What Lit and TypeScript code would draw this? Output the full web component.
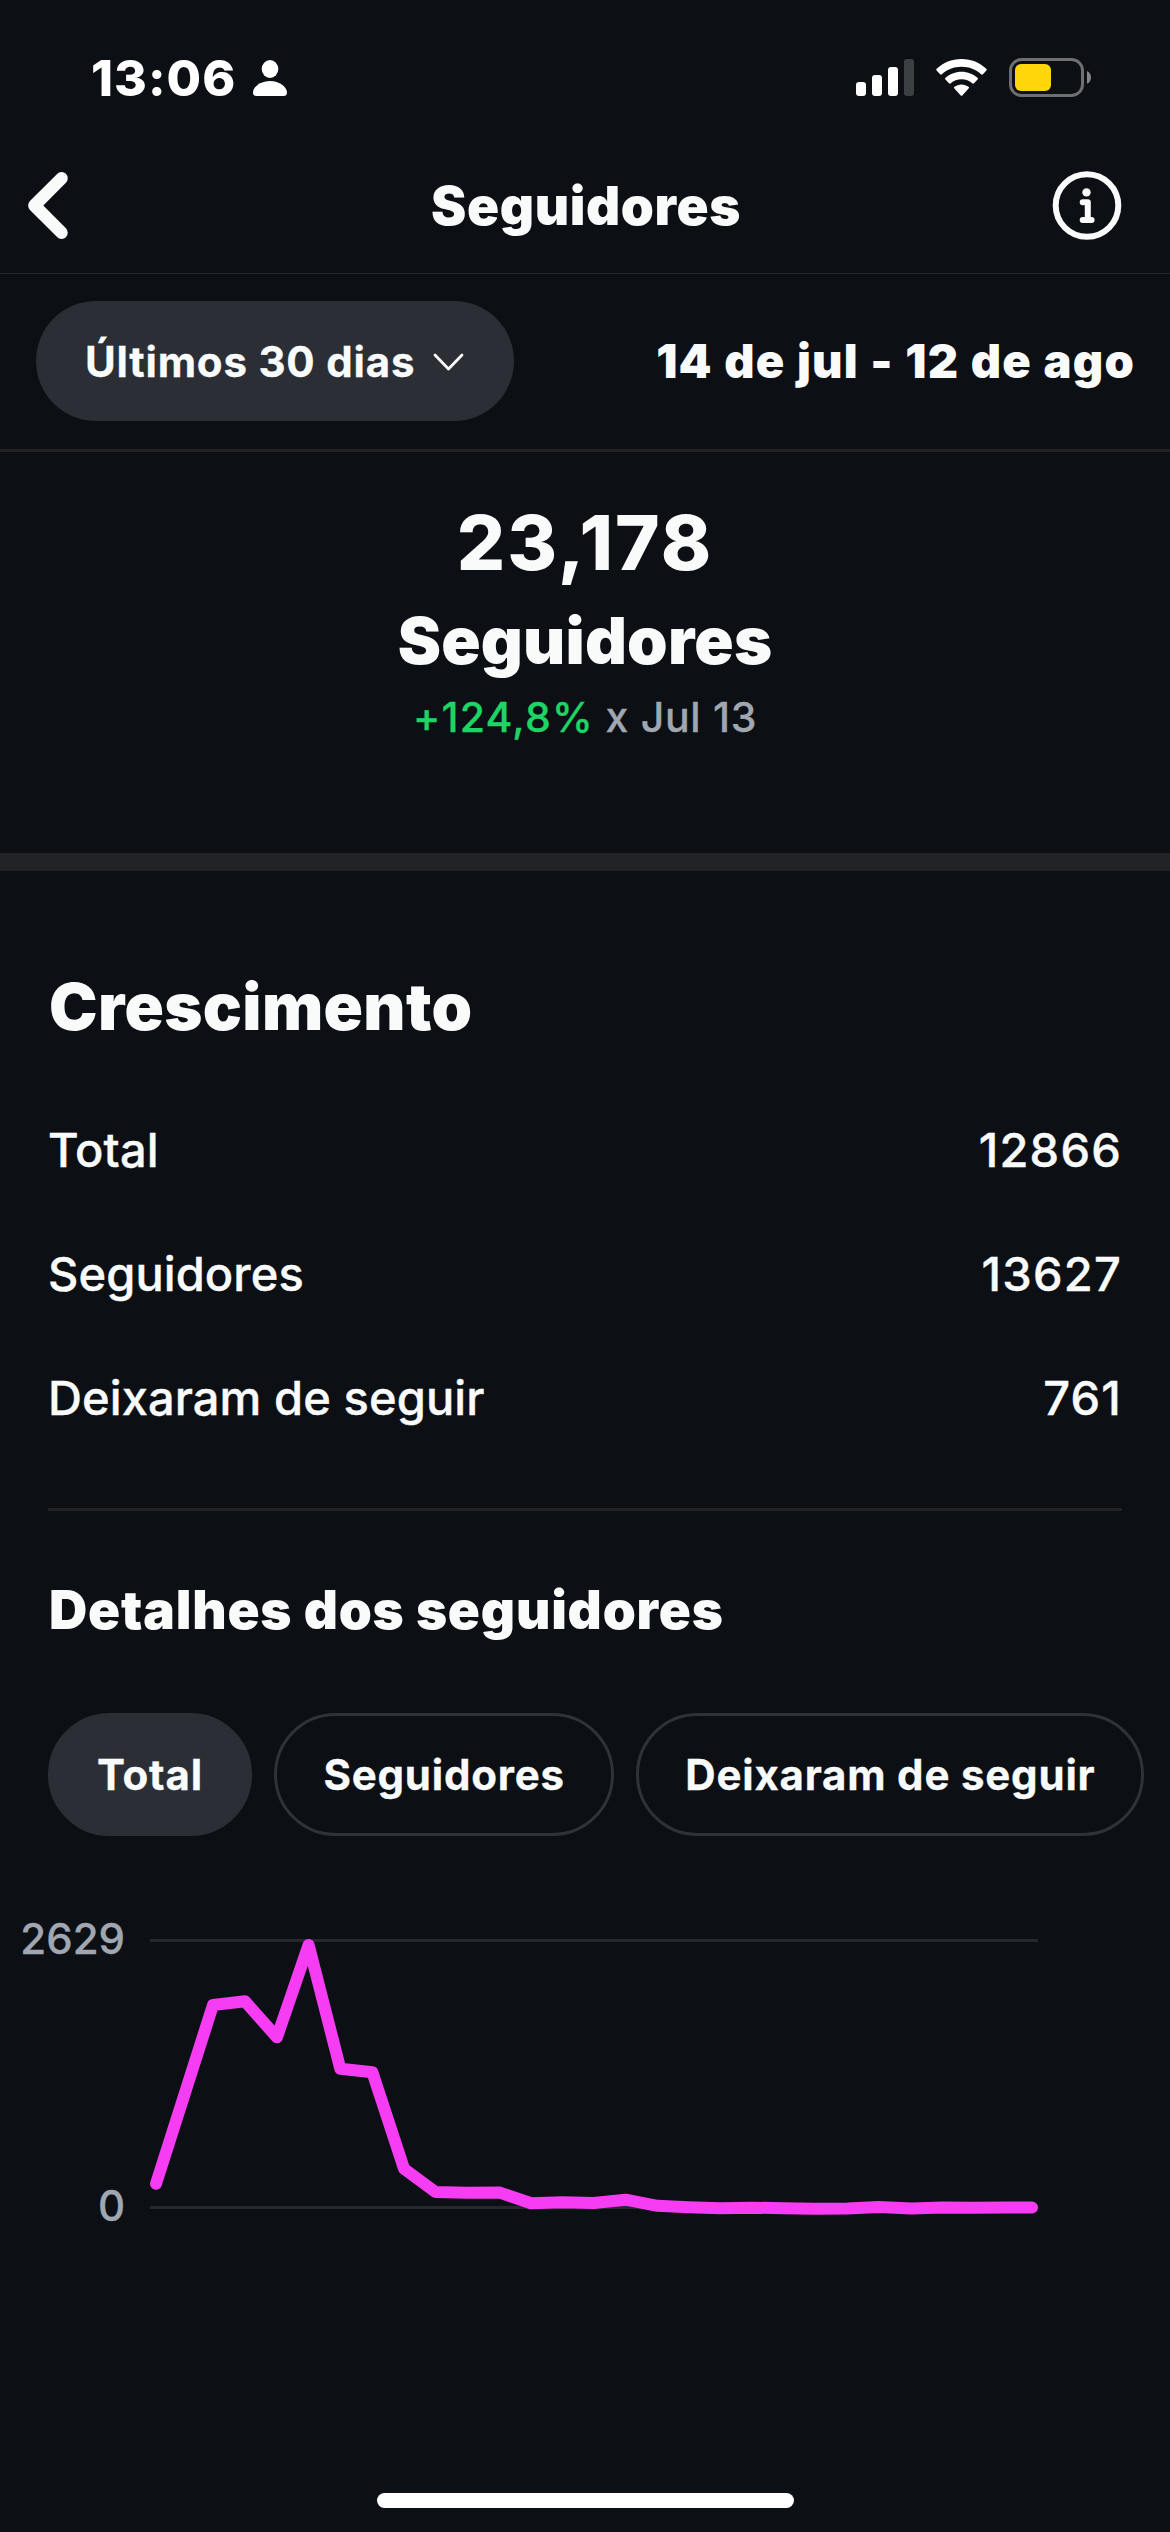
import { LitElement, html, svg, css } from "lit";
import { customElement, property, state } from "lit/decorators.js";
import { classMap } from "lit/directives/class-map.js";

/** Daily net followers as plot coordinates inside the 888x307 chart canvas. */
const SERIES: Array<[number, number]> = [
  [6, 264.7], [63, 86], [95, 82.3], [126.9, 118.3], [158.6, 26], [190.3, 149.7],
  [222.4, 153.3], [254, 249.7], [285.5, 273], [317.2, 273.8], [349.2, 273.4],
  [381, 284.3], [412.7, 283.3], [443.6, 284], [475.7, 280.7], [507.4, 286.8],
  [538.7, 288.3], [570.4, 289.2], [602.2, 288.7], [633.5, 289.2], [665.2, 289.7],
  [697.3, 289.4], [729, 288.1], [761.5, 289.4], [792, 288.5], [824, 288.7],
  [856, 288.6], [882, 288.6],
];

@customElement("status-bar")
class StatusBar extends LitElement {
  static styles = css`
    :host { display: flex; align-items: flex-start; height: 139px; box-sizing: border-box; padding: 53px 79px 0 91px; }
    .time { width: 145px; font-size: 50px; font-weight: 800; line-height: 50px; letter-spacing: 1px; color: #fff; }
    .person { margin: 7px 0 0 17px; }
    .icons { margin-left: auto; display: flex; align-items: flex-start; padding-top: 5px; }
    svg { display: block; }
    .wifi { margin: 1px 0 0 22px; }
    .battery { margin-left: 22px; }
  `;
  render() {
    return html`
      <span class="time">13:06</span>
      <svg class="person" width="34" height="36" viewBox="0 0 34 36" fill="#fff">
        <ellipse cx="17" cy="9" rx="8.3" ry="9" />
        <path d="M17 21C7.500 21 0 27 0 32.500C0 35 1.200 36 3.500 36H30.500C32.800 36 34 35 34 32.500C34 27 26.500 21 17 21Z" />
      </svg>
      <div class="icons">
        <svg width="59" height="38" viewBox="0 0 59 38" fill="#fff">
          <rect x="1" y="24" width="10" height="14" rx="3" />
          <rect x="17" y="17" width="10" height="21" rx="3" />
          <rect x="33" y="9" width="10" height="29" rx="3" />
          <rect x="49" y="1" width="10" height="37" rx="3" fill="#3d4043" />
        </svg>
        <svg class="wifi" width="51" height="37" viewBox="0 0 51 37" fill="#fff">
          <path d="M25.500 0C35.300 0 44 3.700 50.300 9.800C50.900 10.400 50.900 11 50.400 11.500L46.900 15.200C46.300 15.800 45.700 15.800 45.100 15.200C39.900 10.400 33 7.700 25.500 7.700C18 7.700 11.100 10.400 5.900 15.200C5.300 15.800 4.700 15.800 4.100 15.200L0.600 11.500C0.100 11 0.100 10.400 0.700 9.800C7 3.700 15.700 0 25.500 0Z" />
          <path d="M25.500 12.700C31.700 12.700 37.300 15 41.500 18.800C42.100 19.400 42.100 20 41.600 20.500L38 24.200C37.500 24.800 36.800 24.800 36.200 24.200C33.400 21.800 29.700 20.300 25.500 20.300C21.300 20.300 17.600 21.800 14.800 24.200C14.200 24.800 13.500 24.800 13 24.200L9.400 20.500C8.900 20 8.900 19.400 9.500 18.800C13.700 15 19.300 12.700 25.500 12.700Z" />
          <path d="M25.500 25.400C28.200 25.400 30.600 26.300 32.500 27.800C33.200 28.300 33.200 29 32.600 29.600L26.500 36.300C25.900 37 25.100 37 24.500 36.300L18.400 29.600C17.800 29 17.800 28.300 18.500 27.800C20.400 26.300 22.800 25.400 25.500 25.400Z" />
        </svg>
        <svg class="battery" width="82" height="39" viewBox="0 0 82 39">
          <rect x="1.500" y="1.500" width="72" height="36" rx="11" fill="none" stroke="#6d6f72" stroke-width="3" />
          <rect x="6" y="6" width="36" height="27" rx="6" fill="#ffd60a" />
          <path d="M78 13C80.300 14 82 16.500 82 19.400C82 22.300 80.300 24.800 78 25.800Z" fill="#858689" />
        </svg>
      </div>
    `;
  }
}

@customElement("page-header")
class PageHeader extends LitElement {
  @property() heading = "";
  static styles = css`
    :host { display: grid; grid-template-columns: 1fr auto 1fr; align-items: center; height: 135px; box-sizing: border-box; border-bottom: 1px solid #26282c; padding: 0 48px 0 28px; }
    h1 { margin: 0; font-size: 53px; line-height: 60px; font-weight: 900; letter-spacing: 0.6px; padding-left: 22px; }
    svg { display: block; }
    .info { justify-self: end; }
  `;
  render() {
    return html`
      <svg width="41" height="68" viewBox="0 0 41 68" fill="none" stroke="#f9fbfb" stroke-width="12.500" stroke-linecap="round" stroke-linejoin="round">
        <path d="M33.500 6.300L6.400 33.500L33.500 60.700" />
      </svg>
      <h1>${this.heading}</h1>
      <svg class="info" width="70" height="70" viewBox="0 0 70 70">
        <circle cx="35" cy="34.500" r="31.300" fill="none" stroke="#f9fbfb" stroke-width="6" />
        <circle cx="34.500" cy="21.400" r="4.200" fill="#f9fbfb" />
        <path d="M30.700 31.300H35.800V49M30.700 49H39.600" fill="none" stroke="#f9fbfb" stroke-width="6" stroke-linecap="round" stroke-linejoin="round" />
      </svg>
    `;
  }
}

@customElement("stat-row")
class StatRow extends LitElement {
  @property() label = "";
  @property() value = "";
  static styles = css`
    :host { display: flex; justify-content: space-between; font-size: 47px; line-height: 124px; font-weight: 500; -webkit-text-stroke: 0.4px currentColor; }
    .label { letter-spacing: 0.1px; }
    .value { letter-spacing: 1.2px; }
  `;
  render() {
    return html`<span class="label">${this.label}</span><span class="value">${this.value}</span>`;
  }
}

@customElement("follower-chart")
class FollowerChart extends LitElement {
  static styles = css`
    :host { display: flex; height: 307px; }
    .axis { width: 125px; display: flex; flex-direction: column; justify-content: space-between; align-items: flex-end; color: #a0a7b1; font-size: 42px; line-height: 40px; font-weight: 500; -webkit-text-stroke: 0.3px currentColor; }
    .plot { margin-left: 25px; overflow: visible; display: block; }
  `;
  render() {
    const points = SERIES.map((p) => p.join(",")).join(" ");
    return html`
      <div class="axis"><span>2629</span><span>0</span></div>
      <svg class="plot" width="888" height="307" viewBox="0 0 888 307">
        ${[20, 287].map((y) => svg`<rect x="0" y=${y} width="888" height="3" fill="#25282d" />`)}
        <polyline points=${points} fill="none" stroke="#f63df3" stroke-width="12" stroke-linecap="round" stroke-linejoin="round" />
      </svg>
    `;
  }
}

@customElement("app-root")
class AppRoot extends LitElement {
  @state() private selected = 0;
  private chips = ["Total", "Seguidores", "Deixaram de seguir"];

  static styles = css`
    :host { display: flex; flex-direction: column; width: 1170px; height: 2532px; overflow: hidden; background: #0c0f14; color: #f9fbfb; font-family: Inter, "Liberation Sans", sans-serif; white-space: nowrap; }
    button { font-family: inherit; font-size: 42px; line-height: 50px; font-weight: 700; letter-spacing: 0.8px; color: inherit; -webkit-text-stroke: 0.3px currentColor; }
    .filter { display: flex; justify-content: space-between; height: 178px; box-sizing: border-box; padding: 27px 35px 0 36px; border-bottom: 3px solid #212327; }
    .range { display: flex; align-items: center; justify-content: space-between; width: 478px; height: 120px; box-sizing: border-box; border: 0; border-radius: 60px; padding: 2px 50px 0 49px; background: #2b2e35; }
    .dates { font-size: 47px; line-height: 120px; font-weight: 900; letter-spacing: 1.2px; word-spacing: 0.9px; }
    .summary { height: 401px; box-sizing: border-box; padding-top: 45px; text-align: center; }
    .count { font-size: 76px; line-height: 91px; font-weight: 800; letter-spacing: 2px; }
    .unit { font-size: 65px; line-height: 105px; font-weight: 900; letter-spacing: 0.2px; }
    .change { font-size: 41px; line-height: 49px; font-weight: 500; letter-spacing: 0.7px; color: #a0a7b1; -webkit-text-stroke: 0.3px currentColor; }
    .up { letter-spacing: 1.2px; color: #1ed464; }
    .band { height: 18px; background: #212327; }
    .growth { padding: 85px 48px 0; }
    h2 { margin: 0 0 31px; padding-left: 1px; font-size: 65px; line-height: 101px; font-weight: 900; letter-spacing: 0.35px; }
    .rule { height: 3px; margin-top: 48px; background: #212327; }
    h3 { margin: 64px 0 68px; padding-left: 1px; font-size: 53px; line-height: 70px; font-weight: 900; letter-spacing: 0.8px; }
    .chips { display: flex; gap: 22.5px; padding-left: 48px; }
    .chip { height: 123px; box-sizing: border-box; padding: 0 46px; border: 3px solid #2f3237; border-radius: 62px; background: none; }
    .chip.on { background: #2b2e35; border-color: #2b2e35; }
    .chart { margin-top: 83px; }
    .home { width: 417px; height: 15px; border-radius: 8px; background: #fff; margin: auto 376px 24px 377px; }
  `;

  render() {
    return html`
      <status-bar></status-bar>
      <page-header heading="Seguidores"></page-header>
      <div class="filter">
        <button class="range">
          <span>Últimos 30 dias</span>
          <svg width="31" height="20" viewBox="0 0 31 20" fill="none" stroke="#f9fbfb" stroke-width="2.800" stroke-linecap="round" stroke-linejoin="round"><path d="M2 3L15.500 17L29 3" /></svg>
        </button>
        <span class="dates">14 de jul - 12 de ago</span>
      </div>
      <div class="summary">
        <div class="count">23,178</div>
        <div class="unit">Seguidores</div>
        <div class="change"><span class="up">+124,8%</span> x Jul 13</div>
      </div>
      <div class="band"></div>
      <section class="growth">
        <h2>Crescimento</h2>
        <stat-row label="Total" value="12866"></stat-row>
        <stat-row label="Seguidores" value="13627"></stat-row>
        <stat-row label="Deixaram de seguir" value="761"></stat-row>
        <div class="rule"></div>
        <h3>Detalhes dos seguidores</h3>
      </section>
      <div class="chips">
        ${this.chips.map((label, i) => html`<button class=${classMap({ chip: true, on: i === this.selected })} @click=${() => (this.selected = i)}>${label}</button>`)}
      </div>
      <follower-chart class="chart"></follower-chart>
      <div class="home"></div>
    `;
  }
}
